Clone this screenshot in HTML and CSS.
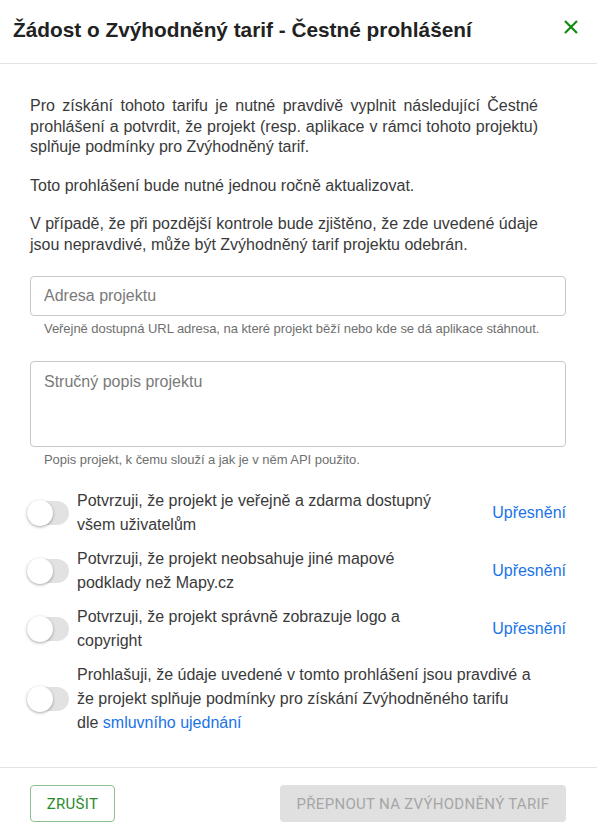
FILE: index.html
```html
<!DOCTYPE html>
<html lang="cs">
<head>
<meta charset="utf-8">
<link rel="stylesheet" href="styles.css">
</head>
<body>
<div class="dialog">
  <header class="dlg-head">
    <h1 class="dlg-title">Žádost o Zvýhodněný tarif - Čestné prohlášení</h1>
    <button class="close" aria-label="Zavřít">
      <svg width="14" height="14" viewBox="0 0 14 14"><path d="M1 1L13 13M13 1L1 13" stroke="#138a13" stroke-width="2.2" fill="none"/></svg>
    </button>
  </header>
  <main class="dlg-body">
    <p class="para">Pro získání tohoto tarifu je nutné pravdivě vyplnit následující Čestné prohlášení a potvrdit, že projekt (resp. aplikace v rámci tohoto projektu) splňuje podmínky pro Zvýhodněný tarif.</p>
    <p class="para">Toto prohlášení bude nutné jednou ročně aktualizovat.</p>
    <p class="para">V případě, že při pozdější kontrole bude zjištěno, že zde uvedené údaje jsou nepravdivé, může být Zvýhodněný tarif projektu odebrán.</p>

    <div class="field first">
      <input class="input" type="text" placeholder="Adresa projektu">
      <div class="helper">Veřejně dostupná URL adresa, na které projekt běží nebo kde se dá aplikace stáhnout.</div>
    </div>
    <div class="field">
      <textarea class="input area" placeholder="Stručný popis projektu"></textarea>
      <div class="helper">Popis projekt, k čemu slouží a jak je v něm API použito.</div>
    </div>

    <div class="switches">
      <div class="srow">
        <span class="switch"><span class="thumb"></span></span>
        <span class="stext">Potvrzuji, že projekt je veřejně a zdarma dostupný všem uživatelům</span>
        <a class="link more" href="#">Upřesnění</a>
      </div>
      <div class="srow">
        <span class="switch"><span class="thumb"></span></span>
        <span class="stext">Potvrzuji, že projekt neobsahuje jiné mapové podklady než Mapy.cz</span>
        <a class="link more" href="#">Upřesnění</a>
      </div>
      <div class="srow">
        <span class="switch"><span class="thumb"></span></span>
        <span class="stext">Potvrzuji, že projekt správně zobrazuje logo a copyright</span>
        <a class="link more" href="#">Upřesnění</a>
      </div>
      <div class="srow">
        <span class="switch"><span class="thumb"></span></span>
        <span class="stext wide">Prohlašuji, že údaje uvedené v tomto prohlášení jsou pravdivé a že projekt splňuje podmínky pro získání Zvýhodněného tarifu dle <a class="link" href="#">smluvního ujednání</a></span>
      </div>
    </div>
  </main>
  <footer class="dlg-foot">
    <button class="btn btn-outline">ZRUŠIT</button>
    <button class="btn btn-disabled" disabled>PŘEPNOUT NA ZVÝHODNĚNÝ TARIF</button>
  </footer>
</div>
</body>
</html>
```

FILE: styles.css
```css
* { box-sizing: border-box; }
html, body { margin: 0; padding: 0; background: #fff; }
body {
  font-family: "Liberation Sans", Arial, sans-serif;
  color: #333;
  width: 597px;
  height: 837px;
  overflow: hidden;
}
.dialog { display: flex; flex-direction: column; height: 837px; }
.dlg-head {
  height: 64px;
  border-bottom: 1px solid #e3e3e3;
  display: flex;
  align-items: center;
  justify-content: space-between;
  padding: 0 19px 4px 13px;
}
.dlg-title {
  margin: 0;
  font-size: 20.8px;
  font-weight: 700;
  color: #222;
}
.close {
  border: 0;
  background: none;
  padding: 0;
  width: 14px;
  height: 14px;
  display: flex;
  cursor: pointer;
  margin-top: -5px;
}
.dlg-body { flex: 1; padding: 32px 31px 0 30px; }
.para {
  margin: 0 0 18px;
  max-width: 508px;
  font-size: 16px;
  line-height: 20.5px;
  color: #3a3a3a;
  text-align: justify;
}
.para:last-of-type { margin-bottom: 0; }
.field { margin-top: 21px; }
.field + .field { margin-top: 25px; }
.input {
  display: block;
  width: 100%;
  height: 40px;
  border: 1px solid #c8c8c8;
  border-radius: 4px;
  padding: 0 13px;
  font-family: inherit;
  font-size: 16px;
  color: #333;
  outline: none;
}
.input::placeholder { color: #7a7a7a; }
.area { height: 86px; padding-top: 11px; resize: none; }
.helper {
  font-size: 13px;
  color: #6f6f6f;
  padding: 5px 0 0 14px;
  line-height: 15px;
  letter-spacing: -0.05px;
}
.switches { margin-top: 22px; display: flex; flex-direction: column; gap: 10px; margin-left: -3px; }
.srow { display: flex; align-items: center; }
.switch {
  flex: none;
  width: 42px;
  height: 24px;
  border-radius: 12px;
  background: #e2e2e2;
  position: relative;
  margin-right: 8px;
}
.thumb {
  position: absolute;
  left: 0;
  top: -1px;
  width: 26px;
  height: 26px;
  border-radius: 50%;
  background: #fff;
  box-shadow: 0 1px 3px rgba(0,0,0,0.35);
}
.stext {
  font-size: 16px;
  line-height: 24px;
  color: #3a3a3a;
  width: 370px;
}
.stext.wide { width: 456px; }
.link { color: #1a73e8; text-decoration: none; }
.more { margin-left: auto; font-size: 16px; }
.dlg-foot {
  height: 70px;
  border-top: 1px solid #e3e3e3;
  display: flex;
  justify-content: space-between;
  align-items: flex-start;
  padding: 17px 31px 0 30px;
}
.btn {
  height: 37px;
  border-radius: 4px;
  font-family: Roboto, "Liberation Sans", sans-serif;
  font-size: 15px;
  letter-spacing: 0.3px;
  padding: 0 12px;
  white-space: nowrap;
}
.btn-outline {
  background: #fff;
  border: 1px solid #8cc08c;
  color: #2d8a2d;
  width: 85px;
}
.btn-disabled {
  background: #e0e0e0;
  border: 0;
  color: #a6a6a6;
  width: 286px;
}
```
